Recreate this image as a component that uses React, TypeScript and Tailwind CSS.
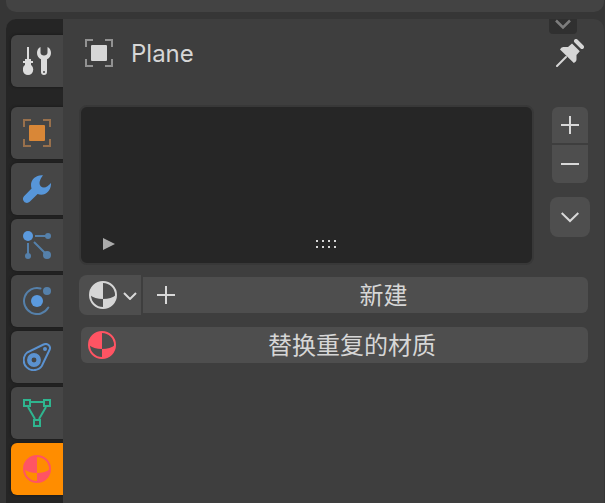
import { useState, type ReactNode } from "react";

function Icon({ children, className = "" }: { children: ReactNode; className?: string }) {
  return (
    <svg viewBox="0 0 28 28" className={`size-7 shrink-0 ${className}`} fill="none" aria-hidden="true">
      {children}
    </svg>
  );
}

function ToolIcon() {
  return (
    <Icon className="text-[#dcdcdc]">
      <path fill="currentColor" d="M4 0h2v12h2v2h2v2H8v2H2v-2H0v-2h2v-2h2Z" />
      <ellipse cx="5" cy="22.500" rx="5.200" ry="5.500" fill="currentColor" />
      <path
        fill="currentColor"
        fillRule="evenodd"
        d="M17.500 0v5.500c0 1.800 1.500 3 3.500 3s3.500-1.200 3.500-3V0C27 1 28 3.500 28 6c0 2.700-1.500 5-4 6.300V25c0 1.800-1.200 3-3 3s-3-1.200-3-3V12.300C15.500 11 14 8.700 14 6c0-2.500 1-5 3.500-6ZM21 24a1 1 0 1 0 0 2 1 1 0 0 0 0-2Z"
      />
    </Icon>
  );
}

function ObjectIcon({ corner, fill }: { corner: string; fill: string }) {
  return (
    <Icon>
      <path stroke={corner} strokeWidth="2" d="M1 8V1h7M20 1h7v7M27 20v7h-7M8 27H1v-7" />
      <rect x="6" y="6" width="16" height="16" rx="1" fill={fill} />
    </Icon>
  );
}

function WrenchIcon() {
  return (
    <Icon className="text-[#5796d9]">
      <path
        fill="currentColor"
        d="M20 .2C13.500-.5 8 4 8 10c0 1.500.2 2.500.6 3.600L1 21.200c-1.400 1.500-1.400 3.700 0 5.300 1.500 1.900 4 1.900 5.700.300l7.900-7.900c1.200.5 2.300.8 3.700.8 5.500 0 10-4.700 9.700-11.700-2.300 2.700-4.800 4.600-7 4.600-2.800 0-4.500-1.900-4.500-4.500 0-2.700 1.500-5.300 3.500-7.900Z"
      />
    </Icon>
  );
}

function ParticlesIcon() {
  return (
    <Icon>
      <g stroke="#5580aa" strokeWidth="2">
        <path d="M12 5h13M5 12v13M11 11l13 13" />
      </g>
      <g fill="#5580aa">
        <circle cx="25" cy="5" r="3" />
        <circle cx="5" cy="25" r="3" />
        <circle cx="24" cy="24" r="4" />
      </g>
      <circle cx="5" cy="5" r="5" fill="#5b9ade" />
    </Icon>
  );
}

function PhysicsIcon() {
  return (
    <Icon>
      <path stroke="#5580aa" strokeWidth="2" strokeLinecap="round" d="M17.500 1.500A13 13 0 1 0 25.300 20.500" />
      <circle cx="24" cy="4" r="4" fill="#5580aa" />
      <circle cx="14" cy="14" r="6" fill="#5b9ade" />
    </Icon>
  );
}

function ConstraintIcon() {
  return (
    <Icon>
      <path stroke="#5b92d0" strokeWidth="2" d="M20.500 1.500 4.500 9.300A10 10 0 1 0 18.800 23L26.700 6.500C28 3 24.500-.3 20.500 1.500Z" />
      <circle cx="11" cy="17" r="4.700" stroke="#5b92d0" strokeWidth="4.500" />
      <circle cx="22" cy="6" r="2" fill="#5b92d0" />
    </Icon>
  );
}

function MeshIcon() {
  return (
    <Icon>
      <g stroke="#2fb58f" strokeWidth="2">
        <rect x="1" y="1" width="6" height="6" />
        <rect x="21" y="1" width="6" height="6" />
        <rect x="11" y="21" width="6" height="6" />
        <path d="M8 3h12M5 8l7 12M23 8l-7 12" />
      </g>
    </Icon>
  );
}

function MaterialIcon({ className }: { className: string }) {
  return (
    <Icon className={className}>
      <circle cx="14" cy="14" r="13" stroke="currentColor" strokeWidth="2" />
      <path
        fill="currentColor"
        d="M14 1v17C8.500 18 4 16.500 1 14 1 7 7 1 14 1ZM14 18c5.500 0 10-1.500 13-4 0 7-6 13-13 13Z"
      />
    </Icon>
  );
}

function PinIcon() {
  return (
    <Icon className="text-[#d6d6d6]">
      <path stroke="currentColor" strokeWidth="4" strokeLinecap="round" d="m20 2 6 6" />
      <path
        fill="currentColor"
        d="m16 4.500 7.800 7.800-3.300 3.700v4.500c0 1.500-1 2.600-2.700 3.500L4 10.500C5 8.800 6.200 8 7.500 8H12Z"
      />
      <path stroke="currentColor" strokeWidth="2" strokeLinecap="round" d="m1 27 9-9" />
    </Icon>
  );
}

function Glyph({ d }: { d: string }) {
  return (
    <svg viewBox="0 0 18 18" className="size-[18px] shrink-0" fill="none" aria-hidden="true">
      <path d={d} stroke="#d8d8d8" strokeWidth="2" />
    </svg>
  );
}

const PLUS = "M9 0v18M0 9h18";
const MINUS = "M0 9h18";
const CHEVRON = "m0.700 5 8.300 8 8.300-8";

const tabs = [
  { name: "Tool", icon: <ToolIcon /> },
  { name: "Object", icon: <ObjectIcon corner="#98704c" fill="#d98737" /> },
  { name: "Modifiers", icon: <WrenchIcon /> },
  { name: "Particles", icon: <ParticlesIcon /> },
  { name: "Physics", icon: <PhysicsIcon /> },
  { name: "Constraints", icon: <ConstraintIcon /> },
  { name: "Data", icon: <MeshIcon /> },
  { name: "Material", icon: <MaterialIcon className="text-[#ff5463]" /> },
];

export default function App() {
  const [active, setActive] = useState("Material");

  return (
    <div className="flex h-screen flex-col gap-[7px] overflow-hidden bg-[#363636] pr-px pl-1.5 font-[Inter,'Noto_Sans_CJK_SC',sans-serif] text-2xl text-[#d6d6d6]">
      <div className="h-3 shrink-0 rounded-b-[10px] bg-[#434343]" />

      <div className="flex min-h-0 flex-1 overflow-hidden rounded-t-[10px] bg-[#3e3e3e]">
        <nav
          role="tablist"
          aria-label="Properties"
          className="flex w-[57px] shrink-0 flex-col gap-1 overflow-hidden bg-[#252525] pt-4 pl-[5px]"
        >
          {tabs.map(({ name, icon }) => (
            <button
              key={name}
              type="button"
              role="tab"
              aria-label={name}
              aria-selected={active === name}
              onClick={() => setActive(name)}
              className={`flex h-[52px] shrink-0 items-center rounded-l-md pl-3 shadow-[0_0_2px_1px_#1e1e1e] first:mb-4 ${
                active === name ? "bg-[#ff8d00]" : "bg-[#464646]"
              }`}
            >
              {icon}
            </button>
          ))}
        </nav>

        <main className="relative flex min-w-0 flex-1 flex-col pr-3.5 pl-4">
          <button
            type="button"
            aria-label="Show header"
            className="absolute top-0 right-[27px] flex h-[15px] w-7 justify-center rounded-b bg-[#303030]"
          >
            <svg viewBox="0 0 16 12" className="h-3 w-4" fill="none" aria-hidden="true">
              <path d="m1 1.500 7 7 7-7" stroke="#7d7d7d" strokeWidth="2.500" />
            </svg>
          </button>

          <header className="flex items-center justify-between pt-5 pr-1.5 pl-1.5">
            <div className="flex items-center gap-[18px]">
              <ObjectIcon corner="#929292" fill="#d6d6d6" />
              <h1 className="h-7 text-2xl leading-[30px]">Plane</h1>
            </div>
            <button type="button" aria-label="Pin">
              <PinIcon />
            </button>
          </header>

          <section className="mt-[38px] flex gap-4">
            <div className="flex h-40 min-w-0 flex-1 flex-col justify-end rounded-lg border-2 border-[#383838] bg-[#262626]">
              <div className="flex items-center pb-[13px] pl-[22px]">
                <button type="button" aria-label="Filter" className="w-4 shrink-0">
                  <svg viewBox="0 0 12 12" className="size-3" aria-hidden="true">
                    <path d="M0 0l12 6-12 6Z" fill="#aaaaaa" />
                  </svg>
                </button>
                <div className="flex flex-1 justify-center">
                  <svg viewBox="0 0 20 8" className="h-2 w-5" fill="#d6d6d6" aria-hidden="true">
                    {[0, 6, 12, 18].map((x) => (
                      <g key={x}>
                        <rect x={x} y="0" width="2" height="2" />
                        <rect x={x} y="6" width="2" height="2" />
                      </g>
                    ))}
                  </svg>
                </div>
              </div>
            </div>

            <div className="flex w-10 shrink-0 flex-col pt-0.5">
              <button
                type="button"
                aria-label="Add"
                className="mx-0.5 mb-0.5 flex h-9 items-center justify-center rounded-t-md bg-[#4e4e4e]"
              >
                <Glyph d={PLUS} />
              </button>
              <button
                type="button"
                aria-label="Remove"
                className="mx-0.5 mb-3.5 flex h-[38px] items-center justify-center rounded-b-md bg-[#4e4e4e]"
              >
                <Glyph d={MINUS} />
              </button>
              <button
                type="button"
                aria-label="Specials"
                className="flex h-10 items-center justify-center rounded-lg bg-[#4e4e4e]"
              >
                <Glyph d={CHEVRON} />
              </button>
            </div>
          </section>

          <div className="mt-2.5 flex items-center gap-0.5 pr-0.5">
            <button
              type="button"
              aria-label="Browse material"
              className="flex h-10 w-[62px] shrink-0 items-center gap-1.5 rounded-l-lg bg-[#4e4e4e] pl-2.5"
            >
              <MaterialIcon className="text-[#d6d6d6]" />
              <svg viewBox="0 0 14 10" className="h-2.5 w-3.5" fill="none" aria-hidden="true">
                <path d="m1 3 6 6 6-6" stroke="#d8d8d8" strokeWidth="2" />
              </svg>
            </button>
            <button type="button" className="flex h-9 min-w-0 flex-1 items-center rounded-r-md bg-[#4e4e4e] pl-3.5">
              <Glyph d={PLUS} />
              <span className="h-9 flex-1 pl-1 leading-[38px]">新建</span>
            </button>
          </div>

          <button type="button" className="mx-0.5 mt-3 flex h-9 items-center rounded-md bg-[#4e4e4e] pl-[7px]">
            <MaterialIcon className="text-[#ff5463]" />
            <span className="h-9 flex-1 leading-[38px]">替换重复的材质</span>
          </button>
        </main>
      </div>
    </div>
  );
}
